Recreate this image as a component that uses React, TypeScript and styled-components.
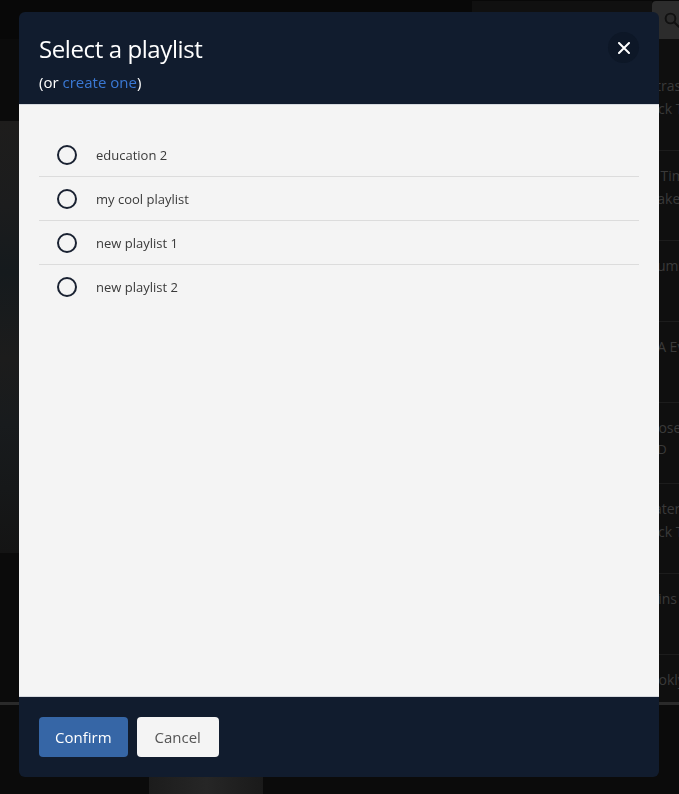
import styled, { createGlobalStyle } from "styled-components";

const GlobalStyle = createGlobalStyle`
  html, body {
    margin: 0;
    padding: 0;
    background: #0b0b0b;
    font-family: "Open Sans", "Noto Sans", sans-serif;
  }
  * {
    box-sizing: border-box;
  }
`;

type Video = {
  lines: string[];
  tall?: boolean;
};

const videos: Video[] = [
  { lines: ["Extras", "Rock Tunes"], tall: true },
  { lines: ["All Time", "Snakes"], tall: true },
  { lines: ["Drums"] },
  { lines: ["In A Eve"] },
  { lines: ["Chosen", "FHD"] },
  { lines: ["Water", "Rock Time"], tall: true },
  { lines: ["Coins"] },
  { lines: ["Booklyn"] },
];

const playlists = ["education 2", "my cool playlist", "new playlist 1", "new playlist 2"];

const App = () => {
  return (
    <>
      <GlobalStyle />
      <Page>
        <TopBar>
          <SearchInput />
          <SearchButton>
            <svg width="18" height="18" viewBox="0 0 24 24" fill="none" stroke="#111" strokeWidth="2.6" strokeLinecap="round">
              <circle cx="10" cy="10" r="6.5" />
              <path d="M15 15l6 6" />
            </svg>
          </SearchButton>
        </TopBar>
        <Main>
          <Content>
            <Hero />
          </Content>
          <Sidebar>
            {videos.map((v, i) => (
              <VideoItem key={i} $tall={v.tall}>
                {v.lines.map((l, j) => (
                  <VideoLine key={j} $small={j > 0 && !v.tall}>
                    {l}
                  </VideoLine>
                ))}
              </VideoItem>
            ))}
          </Sidebar>
        </Main>
        <Progress />
        <Bottom>
          <Thumb />
        </Bottom>
      </Page>

      <Overlay>
        <Modal>
          <Header>
            <div>
              <Title>Select a playlist</Title>
              <Subtitle>
                (or <CreateLink href="#">create one</CreateLink>)
              </Subtitle>
            </div>
            <CloseButton aria-label="Close">
              <svg width="12" height="12" viewBox="0 0 12 12" stroke="#fff" strokeWidth="2" strokeLinecap="round">
                <path d="M1 1l10 10M11 1L1 11" />
              </svg>
            </CloseButton>
          </Header>
          <Body>
            <List>
              {playlists.map((name) => (
                <Row key={name}>
                  <Radio />
                  <RowLabel>{name}</RowLabel>
                </Row>
              ))}
            </List>
          </Body>
          <Footer>
            <Button $primary>Confirm</Button>
            <Button>Cancel</Button>
          </Footer>
        </Modal>
      </Overlay>
    </>
  );
};

export default App;

const Page = styled.div`
  display: flex;
  flex-direction: column;
  height: 794px;
  overflow: hidden;
`;

const TopBar = styled.div`
  display: flex;
  align-items: center;
  justify-content: flex-end;
  height: 42px;
  background: #080808;
`;

const SearchInput = styled.div`
  width: 180px;
  height: 38px;
  background: #101010;
`;

const SearchButton = styled.div`
  width: 27px;
  height: 38px;
  background: #2c2c2c;
  border-radius: 4px 0 0 4px;
  display: flex;
  align-items: center;
  justify-content: flex-end;
  overflow: hidden;
  svg {
    margin-right: -2px;
  }
`;

const Main = styled.div`
  display: flex;
  height: 663px;
`;

const Content = styled.div`
  flex: 1;
  padding-top: 82px;
`;

const Hero = styled.div`
  height: 432px;
  background: linear-gradient(
    180deg,
    #1e1d1c 0%,
    #1b1c1d 20%,
    #151a1d 35%,
    #1c1c1c 55%,
    #181b1d 70%,
    #161819 85%,
    #141414 100%
  );
`;

const Sidebar = styled.div`
  width: 38px;
  padding-top: 22px;
  background: #0f0f0f;
  overflow: hidden;
`;

const VideoItem = styled.div<{ $tall?: boolean }>`
  height: ${(p) => (p.$tall ? 90 : 81)}px;
  padding-top: 13px;
  border-bottom: 1px solid #1c1c1c;
  white-space: nowrap;
`;

const VideoLine = styled.div<{ $small?: boolean }>`
  font-size: ${(p) => (p.$small ? 13 : 14)}px;
  line-height: ${(p) => (p.$small ? 20 : 23)}px;
  color: #3a3a3a;
`;

const Progress = styled.div`
  height: 3px;
  background: #2a2a2a;
`;

const Bottom = styled.div`
  flex: 1;
  background: #0b0b0b;
  padding: 69px 0 0 149px;
`;

const Thumb = styled.div`
  width: 114px;
  height: 20px;
  background: linear-gradient(90deg, #1c1c1c, #262626 50%, #1a1a1a);
`;

const Overlay = styled.div`
  position: fixed;
  inset: 0;
  display: flex;
  align-items: flex-start;
  padding: 12px 0 0 19px;
`;

const Modal = styled.div`
  width: 640px;
  height: 765px;
  display: flex;
  flex-direction: column;
  border-radius: 6px;
  overflow: hidden;
  background: #111c2e;
`;

const Header = styled.div`
  display: flex;
  justify-content: space-between;
  align-items: flex-start;
  height: 92px;
  padding: 21px 20px 0 20px;
  color: #fff;
`;

const Title = styled.h2`
  margin: 0;
  font-size: 24px;
  font-weight: 400;
  line-height: 32px;
  letter-spacing: -0.4px;
`;

const Subtitle = styled.div`
  margin-top: 7px;
  font-size: 15px;
  line-height: 20px;
  color: #fff;
`;

const CreateLink = styled.a`
  color: #3a78d4;
  text-decoration: none;
`;

const CloseButton = styled.button`
  width: 31px;
  height: 31px;
  margin-top: -1px;
  border: none;
  border-radius: 50%;
  background: #0d1727;
  display: flex;
  align-items: center;
  justify-content: center;
  padding: 0;
  cursor: pointer;
`;

const Body = styled.div`
  flex: 1;
  background: #f4f4f4;
  border-top: 1px solid #d6d9de;
  border-bottom: 1px solid #d6d9de;
  padding: 28px 20px 0 20px;
`;

const List = styled.div`
  display: flex;
  flex-direction: column;
`;

const Row = styled.label`
  display: flex;
  align-items: center;
  height: 44px;
  padding-left: 18px;
  border-bottom: 1px solid #dcdcdc;
  &:last-child {
    border-bottom: none;
  }
`;

const Radio = styled.span`
  width: 20px;
  height: 20px;
  border: 2px solid #1a2232;
  border-radius: 50%;
  flex-shrink: 0;
`;

const RowLabel = styled.span`
  margin-left: 19px;
  font-size: 13px;
  color: #3a3a3a;
`;

const Footer = styled.div`
  display: flex;
  align-items: center;
  gap: 9px;
  height: 80px;
  padding: 0 20px;
`;

const Button = styled.button<{ $primary?: boolean }>`
  height: 40px;
  padding: 0 ${(p) => (p.$primary ? 16 : 18)}px;
  border: none;
  border-radius: 4px;
  font-family: inherit;
  font-size: 15px;
  background: ${(p) => (p.$primary ? "#3666a6" : "#f4f4f4")};
  color: ${(p) => (p.$primary ? "#fff" : "#555")};
  cursor: pointer;
`;
